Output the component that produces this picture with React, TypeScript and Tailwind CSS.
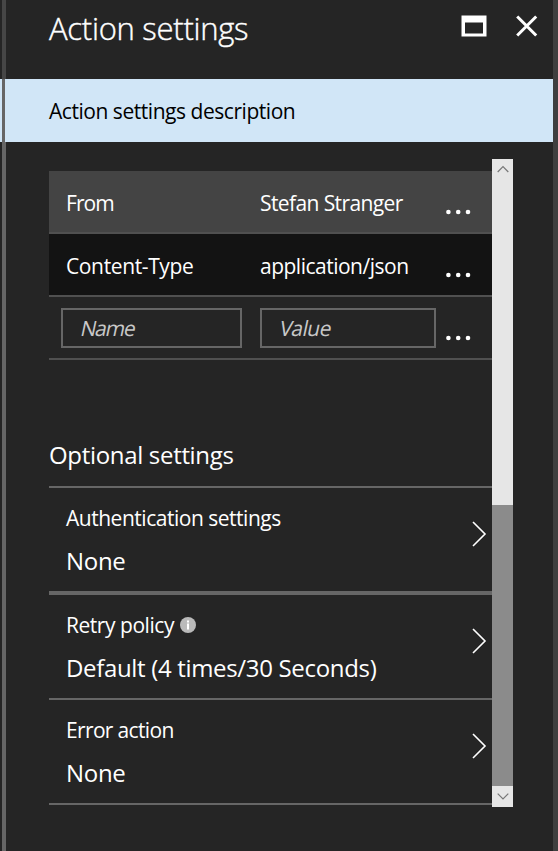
import React from "react";

function Dots() {
  return (
    <svg width="26" height="6" viewBox="0 0 26 6" fill="#fff" className="ml-auto mr-[20px] mt-[20px] shrink-0">
      <circle cx="2.4" cy="3" r="2.3" />
      <circle cx="12.2" cy="3" r="2.3" />
      <circle cx="22" cy="3" r="2.3" />
    </svg>
  );
}

function HeaderRow({ name, value, row, nameGap, valueGap }: { name: string; value: string; row: string; nameGap: string; valueGap: string }) {
  return (
    <div className={`flex h-[63px] items-center border-b-2 border-[#505050] pl-[17px] ${row}`}>
      <div className="w-[194px] shrink-0 pt-[3px]"><span className={nameGap}>{name}</span></div>
      <div className="pt-[3px]"><span className={valueGap}>{value}</span></div>
      <Dots />
    </div>
  );
}

function Setting({ label, value, box, labelGap, valueGap, info }: { label: string; value: string; box: string; labelGap: string; valueGap: string; info?: boolean }) {
  return (
    <div className={`flex items-center justify-between border-[#666] pl-[17px] pr-[5px] ${box}`}>
      <div className="flex flex-col">
        <div className="flex h-[42px] items-center gap-[6px] pb-px">
          <span className={labelGap}>{label}</span>
          {info && (
            <svg width="16" height="16" viewBox="0 0 16 16" className="mb-px">
              <circle cx="8" cy="8" r="8" fill="#bababa" />
              <path d="M7 3.5h2v2H7zM7 6.5h2v6H7z" fill="#fff" />
            </svg>
          )}
        </div>
        <div className="flex h-[42px] items-center text-[24px]"><span className={valueGap}>{value}</span></div>
      </div>
      <svg width="16" height="26" viewBox="0 0 16 26" fill="none" stroke="#fff" strokeWidth="1.6" className="mt-[-13px]">
        <path d="M2 1L14 13L2 25" />
      </svg>
    </div>
  );
}

export default function App() {
  return (
    <div className="flex h-[851px] w-[558px] overflow-hidden bg-[#252525] font-['Open_Sans','Noto_Sans',sans-serif] text-[21px] leading-none whitespace-nowrap text-white">
      <div className="flex w-[6px] shrink-0 flex-col">
        <div className="ml-[2px] h-[79px] bg-[#464646]" />
        <div className="h-[63px] bg-[#d1e6f7] pr-px pl-[2px]"><div className="h-full bg-[#666]" /></div>
        <div className="ml-[2px] flex-1 bg-[#666]" />
      </div>
      <div className="flex w-[547px] shrink-0 flex-col">
        <header className="flex h-[79px] items-start pl-[43px]">
          <h1 className="mt-[13px] text-[31px] leading-[30px] font-light [-webkit-text-stroke:0.4px_white]"><span className="tracking-[-0.27px]">Action settings</span></h1>
          <svg width="26" height="22" viewBox="0 0 26 22" className="mt-[15px] ml-auto">
            <path fillRule="evenodd" fill="#fff" d="M.5.5h25v21H.5zM4 7.5v11h18v-11z" />
          </svg>
          <svg width="22" height="22" viewBox="0 0 22 22" stroke="#fff" strokeWidth="3" className="mt-[15px] mr-[15px] ml-[29px]">
            <path d="M1.2 1.5L20.2 20.5M20.2 1.5L1.2 20.5" />
          </svg>
        </header>
        <div className="flex h-[63px] items-center bg-[#d1e6f7] pt-[2px] pl-[43px] text-black"><span className="tracking-[-0.46px]">Action settings description</span></div>
        <div className="mt-[17px] flex h-[648px] pl-[43px]">
          <div className="flex w-[443px] flex-col pt-[12px]">
            <HeaderRow name="From" value="Stefan Stranger" row="bg-[#444]" nameGap="tracking-[-0.9px]" valueGap="tracking-[-0.6px]" />
            <HeaderRow name="Content-Type" value="application/json" row="bg-[#131313]" nameGap="tracking-[-0.37px]" valueGap="tracking-[-0.5px]" />
            <div className="flex h-[63px] items-center border-b-2 border-[#505050] pl-[12px] text-[#c8c8c8]">
              <div className="flex h-[40px] w-[181px] items-center border-2 border-[#666] pt-px pl-[18px]"><span className="inline-block -skew-x-12 tracking-[-1.2px]">Name</span></div>
              <div className="ml-[18px] flex h-[40px] w-[176px] items-center border-2 border-[#666] pt-px pl-[18px]"><span className="inline-block -skew-x-12 tracking-[-0.6px]">Value</span></div>
              <Dots />
            </div>
            <h2 className="flex h-[128px] items-end border-b-2 border-[#666] pb-[19px] text-[24px] leading-[24px]"><span className="tracking-[-0.32px]">Optional settings</span></h2>
            <Setting label="Authentication settings" value="None" box="h-[107px] border-b-4 pb-[9px] pt-[10px]" labelGap="tracking-[-0.48px]" valueGap="tracking-[-0.3px]" />
            <Setting label="Retry policy" value="Default (4 times/30 Seconds)" box="h-[105px] border-b-2 pb-[9px] pt-[10px]" labelGap="tracking-[-0.46px]" valueGap="tracking-[-0.33px]" info />
            <Setting label="Error action" value="None" box="h-[105px] border-b-2 pb-[9px] pt-[10px]" labelGap="tracking-[-0.65px]" valueGap="tracking-[-0.3px]" />
          </div>
          <div className="flex w-[21px] flex-col bg-[#8b8b8b]">
            <div className="flex h-[346px] justify-center bg-[#e6e6e6] pt-[6px]">
              <svg width="12" height="8" viewBox="0 0 12 8" fill="none" stroke="#777" strokeWidth="1.2"><path d="M.7 7L6 1.6L11.3 7" /></svg>
            </div>
            <div className="mt-auto flex h-[21px] justify-center bg-[#e6e6e6] pt-[6px]">
              <svg width="12" height="8" viewBox="0 0 12 8" fill="none" stroke="#777" strokeWidth="1.2"><path d="M.7 1.6L6 7L11.3 1.6" /></svg>
            </div>
          </div>
        </div>
      </div>
      <div className="w-[5px] bg-[#3f3f3f]" />
    </div>
  );
}
